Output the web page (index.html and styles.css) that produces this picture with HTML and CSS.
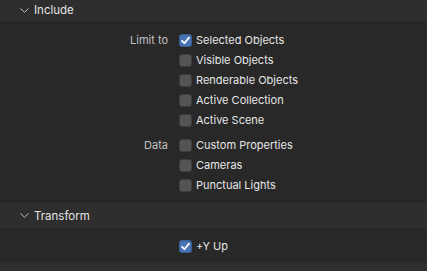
FILE: index.html
```html
<!DOCTYPE html>
<html>
<head>
<meta charset="utf-8">
<link rel="stylesheet" href="styles.css">
</head>
<body>
<div class="panel">
  <div class="panel-header first">
    <svg class="chev" width="9" height="5" viewBox="0 0 9 5"><path d="M0.5 0.5 L4.5 4.3 L8.5 0.5" fill="none" stroke="#bdbdbd" stroke-width="1"/></svg>
    <span>Include</span>
  </div>
  <div class="panel-body include">
    <div class="group">
      <div class="row"><span class="label">Limit to</span><span class="cb on"><svg width="13" height="13" viewBox="0 0 13 13"><path d="M3 6.8 L5.4 9.2 L10 3.6" fill="none" stroke="#fff" stroke-width="1.8" stroke-linecap="round" stroke-linejoin="round"/></svg></span><span class="opt">Selected Objects</span></div>
      <div class="row"><span class="label"></span><span class="cb"></span><span class="opt">Visible Objects</span></div>
      <div class="row"><span class="label"></span><span class="cb"></span><span class="opt">Renderable Objects</span></div>
      <div class="row"><span class="label"></span><span class="cb"></span><span class="opt">Active Collection</span></div>
      <div class="row"><span class="label"></span><span class="cb"></span><span class="opt">Active Scene</span></div>
    </div>
    <div class="group">
      <div class="row"><span class="label">Data</span><span class="cb"></span><span class="opt">Custom Properties</span></div>
      <div class="row"><span class="label"></span><span class="cb"></span><span class="opt">Cameras</span></div>
      <div class="row"><span class="label"></span><span class="cb"></span><span class="opt">Punctual Lights</span></div>
    </div>
  </div>
  <div class="panel-header">
    <svg class="chev" width="9" height="5" viewBox="0 0 9 5"><path d="M0.5 0.5 L4.5 4.3 L8.5 0.5" fill="none" stroke="#bdbdbd" stroke-width="1"/></svg>
    <span>Transform</span>
  </div>
  <div class="panel-body transform">
    <div class="row"><span class="label"></span><span class="cb on"><svg width="13" height="13" viewBox="0 0 13 13"><path d="M3 6.8 L5.4 9.2 L10 3.6" fill="none" stroke="#fff" stroke-width="1.8" stroke-linecap="round" stroke-linejoin="round"/></svg></span><span class="opt">+Y Up</span></div>
  </div>
  <div class="panel-header last"></div>
</div>
</body>
</html>
```
FILE: styles.css
```css
html, body {
  margin: 0;
  padding: 0;
  background: #282828;
  width: 427px;
  height: 271px;
  overflow: hidden;
}
.panel {
  font-family: Inter, "DejaVu Sans", sans-serif;
  font-size: 11px;
  border-right: 1px solid #2f2f2f;
  width: 426px;
}
.panel-header {
  height: 25px;
  background: #2e2e2e;
  display: flex;
  align-items: center;
  color: #e4e4e4;
  font-size: 11.5px;
}
.panel-header.first {
  margin-top: -2px;
  padding-top: 1px;
  height: 22px;
}
.panel-header.last {
  height: 8px;
}
.chev {
  margin-left: 20px;
  margin-right: 5px;
}
.panel-body {
  background: #282828;
}
.panel-body.include {
  height: 182px;
  padding-top: 9px;
  box-sizing: border-box;
}
.group + .group {
  margin-top: 5px;
}
.panel-body.transform {
  height: 35px;
  padding-top: 8px;
  box-sizing: border-box;
}
.row {
  height: 20px;
  display: flex;
  align-items: center;
}
.label {
  width: 179px;
  flex: none;
  text-align: right;
  color: #c2c2c2;
  padding-right: 11px;
  box-sizing: border-box;
}
.cb {
  width: 13px;
  height: 13px;
  flex: none;
  border-radius: 3px;
  background: #545454;
  box-sizing: border-box;
  border: 1px solid #3d3d3d;
  margin-right: 4px;
  display: flex;
}
.cb svg { margin: -1px; }
.cb.on {
  background: #4772b3;
  border-color: #3b5f94;
}
.opt {
  color: #e6e6e6;
}
```
